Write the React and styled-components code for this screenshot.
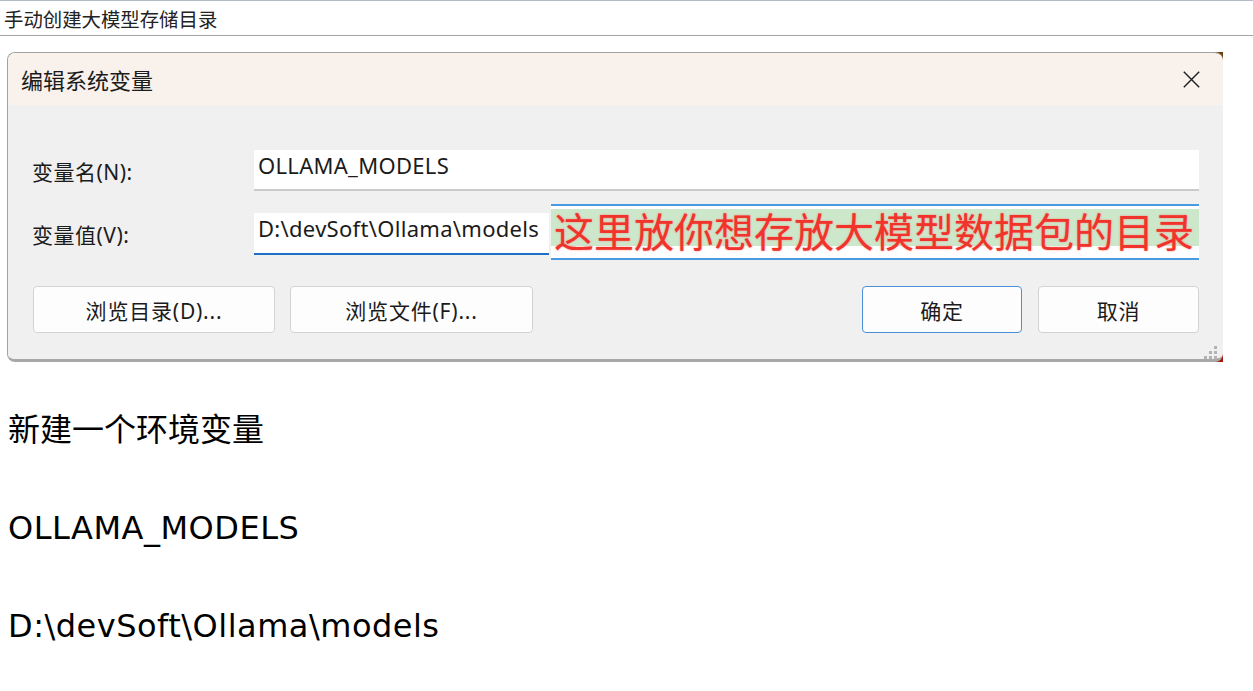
import React from 'react'
import styled, { createGlobalStyle } from 'styled-components'

const ui = `"Noto Sans", "Noto Sans CJK SC", sans-serif`

const GlobalStyle = createGlobalStyle`
  body {
    margin: 0;
    background: #fff;
    color: #000;
  }
`

const Page = styled.div`
  width: 1253px;
`

const TopBar = styled.div`
  height: 32px;
  padding: 2px 0 0 4px;
  border-top: 1px solid #b3bbc8;
  border-bottom: 1px solid #a4a4a4;
  font-family: "Noto Sans CJK SC", sans-serif;
  font-size: 19.4px;
  line-height: 32px;
  color: #222;
`

// screenshot of the windows dialog, wallpaper peeks out on the right
const Shot = styled.div`
  margin: 16px 0 0 7px;
  width: 1216px;
  height: 310px;
  display: flex;
  background:
    linear-gradient(135deg, transparent 55%, #a3160a 75%) right bottom / 20px 20px no-repeat,
    linear-gradient(to bottom, #6a3f0e, #8c5a20 45%, #b27a36) right / 70px 100% no-repeat;
`

const Dialog = styled.div`
  position: relative;
  flex: 1;
  display: flex;
  flex-direction: column;
  border: 1px solid #a2a2a2;
  border-right: 0;
  border-bottom: 3px solid #a8a8a8;
  border-radius: 8px;
  overflow: hidden;
  font-family: ${ui};
  color: #1b1b1b;
`

const Header = styled.div`
  height: 52px;
  flex: none;
  display: flex;
  align-items: center;
  justify-content: space-between;
  padding: 0 23px 0 13px;
  background: #f8f1ec;
  font-size: 22px;
`

const Body = styled.div`
  flex: 1;
  display: flex;
  flex-direction: column;
  padding: 45px 24px 26px 24px;
  background: #f0f0f0;
`

const Row = styled.div`
  display: flex;
  align-items: flex-start;
  margin-top: ${p => p.$top || 0}px;
`

const Label = styled.div`
  flex: none;
  width: 222px;
  height: 41px;
  margin-top: ${p => p.$top || 0}px;
  padding-top: 3px;
  box-sizing: border-box;
  font-size: 21px;
  letter-spacing: 0.5px;
  line-height: 38px;
`

const Field = styled.div`
  flex: ${p => (p.$width ? 'none' : '1')};
  width: ${p => (p.$width ? `${p.$width}px` : 'auto')};
  height: ${p => p.$h || 41}px;
  margin-top: ${p => p.$top || 0}px;
  box-sizing: border-box;
  padding: 0 4px;
  background: #fff;
  border-bottom: 2px solid ${p => p.$line || '#cacaca'};
  font-size: 22px;
  letter-spacing: 0.3px;
  line-height: 31px;
  white-space: nowrap;
  overflow: hidden;
`

const Note = styled.div`
  flex: 1;
  height: 56px;
  margin-left: 2px;
  box-sizing: border-box;
  padding-left: 3px;
  border-top: 2px solid #4b9be3;
  border-bottom: 2px solid #4b9be3;
  background: linear-gradient(#fff 0 3px, #cde7cb 3px 40px, #fff 40px);
  font-family: "Noto Sans CJK SC", sans-serif;
  font-size: 40px;
  font-weight: 400;
  line-height: 48px;
  color: #f0332b;
  text-shadow: 0 0 2px rgba(255, 110, 110, 0.8);
  white-space: nowrap;
`

const Buttons = styled.div`
  display: flex;
  margin-top: 26px;
  padding-left: 1px;
`

const Button = styled.div`
  flex: none;
  width: ${p => p.$w}px;
  height: 47px;
  margin-left: ${p => p.$gap || 0}px;
  box-sizing: border-box;
  display: flex;
  align-items: center;
  justify-content: center;
  background: #fdfdfd;
  border: 1px solid ${p => (p.$primary ? '#4a8fd8' : '#d3d3d3')};
  border-radius: 4px;
  font-size: 21px;
  letter-spacing: 0.8px;
`

const Spacer = styled.div`
  flex: 1;
`

const Grip = styled.svg`
  position: absolute;
  right: 6px;
  bottom: 0;
`

const Notes = styled.div`
  display: flex;
  flex-direction: column;
  gap: 58px;
  margin-top: 48px;
  padding-left: 8px;
`

const Line = styled.p`
  margin: 0;
  font-family: ${p => (p.$serif
    ? `"Liberation Serif", "Noto Sans CJK SC", serif`
    : `"DejaVu Sans", sans-serif`)};
  font-size: 32px;
  letter-spacing: ${p => (p.$serif ? 0 : 0.5)}px;
  line-height: 40px;
  color: #000;
`

const CloseIcon = () => (
  <svg width="17" height="17" viewBox="0 0 17 17">
    <path d="M0.8 0.8 L16.2 16.2 M16.2 0.8 L0.8 16.2" stroke="#1f1f1f" strokeWidth="1.4" fill="none" />
  </svg>
)

const App = () => (
  <Page>
    <GlobalStyle />
    <TopBar>手动创建大模型存储目录</TopBar>
    <Shot>
      <Dialog>
        <Header>
          <span>编辑系统变量</span>
          <CloseIcon />
        </Header>
        <Body>
          <Row>
            <Label>变量名(N):</Label>
            <Field>OLLAMA_MODELS</Field>
          </Row>
          <Row $top={13}>
            <Label $top={9}>变量值(V):</Label>
            <Field $width={295} $h={42} $top={9} $line="#1f6fc5">D:\devSoft\Ollama\models</Field>
            <Note>这里放你想存放大模型数据包的目录</Note>
          </Row>
          <Buttons>
            <Button $w={242}>浏览目录(D)...</Button>
            <Button $w={243} $gap={15}>浏览文件(F)...</Button>
            <Spacer />
            <Button $w={160} $primary>确定</Button>
            <Button $w={161} $gap={16}>取消</Button>
          </Buttons>
        </Body>
        <Grip width="13" height="13" viewBox="0 0 13 13">
          <g fill="#b2b2b2">
            <rect x="10" y="0" width="3" height="3" />
            <rect x="5" y="5" width="3" height="3" />
            <rect x="10" y="5" width="3" height="3" />
            <rect x="0" y="10" width="3" height="3" />
            <rect x="5" y="10" width="3" height="3" />
            <rect x="10" y="10" width="3" height="3" />
          </g>
        </Grip>
      </Dialog>
    </Shot>
    <Notes>
      <Line $serif>新建一个环境变量</Line>
      <Line>OLLAMA_MODELS</Line>
      <Line>D:\devSoft\Ollama\models</Line>
    </Notes>
  </Page>
)

export default App
